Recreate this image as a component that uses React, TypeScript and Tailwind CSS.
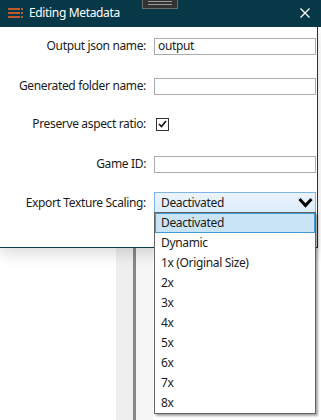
export default function App() {
  const items = [
    "Deactivated",
    "Dynamic",
    "1x (Original Size)",
    "2x",
    "3x",
    "4x",
    "5x",
    "6x",
    "7x",
    "8x",
  ];
  return (
    <div className="relative flex h-[420px] w-[321px] flex-col overflow-hidden bg-white text-[12px] leading-none tracking-[-0.35px] text-[#1b1b1b] font-['Noto_Sans',sans-serif]">
      {/* title bar */}
      <div className="relative z-20 flex h-[27px] w-full shrink-0 items-start bg-[#073847] pt-[5px] text-white">
        <svg className="ml-[8px] mt-[3px]" width="16" height="10" viewBox="0 0 16 10">
          <rect x="0" y="0" width="12" height="2" fill="#c2592c" />
          <rect x="13" y="0" width="2" height="2" fill="#c2592c" />
          <rect x="0" y="4" width="12" height="2" fill="#c2592c" />
          <rect x="13" y="4" width="2" height="2" fill="#c2592c" />
          <rect x="0" y="8" width="12" height="2" fill="#c2592c" />
          <rect x="13" y="8" width="2" height="2" fill="#c2592c" />
        </svg>
        <span className="ml-[5px] text-[12px] leading-[15px]">Editing Metadata</span>
        <svg className="ml-auto mr-[11px] mt-[3px]" width="10" height="10" viewBox="0 0 10 10">
          <path d="M0.5 0.5 L9.5 9.5 M9.5 0.5 L0.5 9.5" stroke="white" strokeWidth="1.3" />
        </svg>
        <div className="absolute left-[142px] top-0 flex h-[9px] w-[36px] flex-col items-center gap-[2px] border border-t-0 border-[#6c6c6c] bg-[#323232] pt-[1px]">
          <div className="h-px w-[24px] bg-[#9a9a9a]" />
          <div className="h-px w-[24px] bg-[#9a9a9a]" />
        </div>
      </div>

      {/* window body */}
      <div className="relative z-10 h-[221px] w-[318px] shrink-0 border-b border-r border-[#0a3a4a] bg-white shadow-[0_6px_14px_rgba(0,0,0,0.14)]">
        <div className="flex flex-col">
          <div className="mt-[9px] flex h-[20px] items-center">
            <div className="w-[146px] text-right">Output json name:</div>
            <div className="ml-[8px] flex h-[17px] w-[162px] items-center border border-[#ababab] pl-[3px]">output</div>
          </div>
          <div className="mt-[20px] flex h-[20px] items-center">
            <div className="w-[146px] text-right">Generated folder name:</div>
            <div className="ml-[8px] h-[17px] w-[162px] border border-[#ababab]" />
          </div>
          <div className="mt-[18px] flex h-[20px] items-center">
            <div className="w-[146px] text-right">Preserve aspect ratio:</div>
            <div className="ml-[10px] flex h-[13px] w-[13px] items-center justify-center border border-[#333]">
              <svg width="9" height="8" viewBox="0 0 9 8">
                <path d="M1 4 L3.5 6.5 L8 1" stroke="#111" strokeWidth="1.6" fill="none" />
              </svg>
            </div>
          </div>
          <div className="mt-[20px] flex h-[20px] items-center">
            <div className="w-[146px] text-right">Game ID:</div>
            <div className="ml-[8px] h-[17px] w-[162px] border border-[#ababab]" />
          </div>
          <div className="mt-[18px] flex h-[21px] items-center">
            <div className="w-[146px] text-right">Export Texture Scaling:</div>
            <div className="ml-[8px] flex h-[21px] w-[162px] items-center border border-[#7eb4ea] bg-gradient-to-b from-[#ecf4fc] to-[#dcecfc] pl-[6px] pr-[2px]">
              <span>Deactivated</span>
              <svg className="ml-auto" width="15" height="11" viewBox="0 0 15 11">
                <path d="M1.5 2 L7.5 8.5 L13.5 2" stroke="#000" strokeWidth="3" fill="none" />
              </svg>
            </div>
          </div>
        </div>
      </div>

      {/* background below window */}
      <div className="flex flex-1">
        <div className="w-[116px] bg-white" />
        <div className="w-[17px] bg-[#efefef]" />
        <div className="w-[3px] bg-[#888888]" />
        <div className="w-[17px] bg-[#f6f6f6]" />
        <div className="flex-1 bg-white" />
      </div>

      {/* dropdown list */}
      <div className="absolute left-[154px] top-[212px] z-30 flex w-[162px] flex-col border border-[#646464] bg-white shadow-[2px_2px_2px_rgba(0,0,0,0.35)]">
        {items.map((it, i) => (
          <div
            key={it}
            className={
              i === 0
                ? "flex h-[20px] items-center border border-[#3f9bd3] bg-[#c9e4f5] pl-[5px]"
                : "flex h-[20px] items-center pl-[6px]"
            }
          >
            {it}
          </div>
        ))}
      </div>
    </div>
  );
}
